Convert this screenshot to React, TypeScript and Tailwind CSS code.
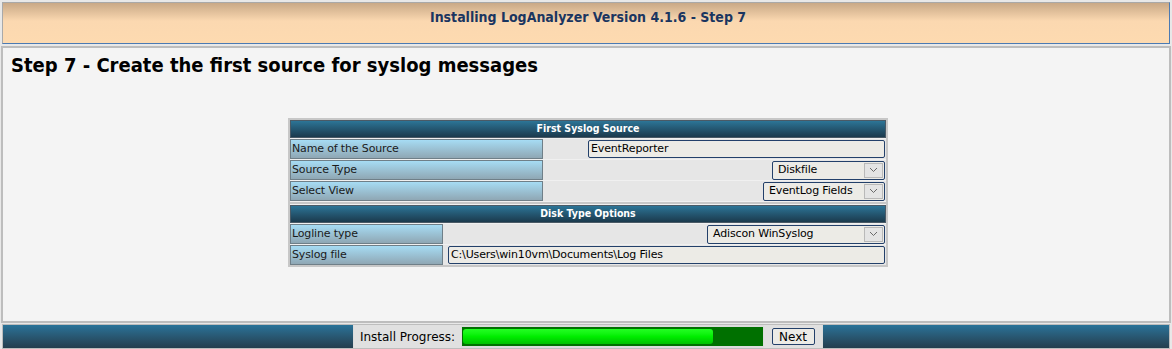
import React from "react";

const font = { fontFamily: '"DejaVu Sans", Verdana, sans-serif' };
const cond = { fontFamily: '"DejaVu Sans Condensed", "DejaVu Sans", sans-serif' };

function Label({ children }: { children: React.ReactNode }) {
  return (
    <div className="flex items-center h-full px-px text-[11px] tracking-[-0.15px] text-[#1a1a1a] border border-[#6f7f88] bg-gradient-to-b from-[#a6dcf4] to-[#8fa7b4]">
      {children}
    </div>
  );
}

function Select({ value, w }: { value: string; w: string }) {
  return (
    <div className={`flex items-stretch h-[19px] ${w} border border-[#23406a] rounded-[2px] bg-[#ecebe6]`}>
      <span className="flex-1 flex items-center pl-[5px] text-[11px] tracking-[-0.15px] text-black">{value}</span>
      <span className="w-[19px] m-px flex items-center justify-center border border-[#b9b9b9] bg-[#e4e4e4]">
        <svg width="9" height="6" viewBox="0 0 9 6">
          <path d="M1 1 L4.5 4.5 L8 1" fill="none" stroke="#6a6a6a" strokeWidth="1" />
        </svg>
      </span>
    </div>
  );
}

function Input({ value, w }: { value: string; w: string }) {
  return (
    <div className={`flex items-center h-[18px] ${w} border border-[#23406a] rounded-[2px] bg-[#ecebe6] pl-[2px] text-[11px] tracking-[-0.15px] text-black`}>
      {value}
    </div>
  );
}

function Head({ children }: { children: React.ReactNode }) {
  return (
    <div
      className="h-[18px] flex items-center justify-center text-[10.5px] font-bold text-white bg-gradient-to-b from-[#2c7597] to-[#1b3a4d] border border-[#4a5a66]"
      style={cond}
    >
      {children}
    </div>
  );
}

export default function App() {
  return (
    <div className="w-[1172px] h-[349px] bg-[#e8e8e8] flex flex-col" style={font}>
      {/* top banner */}
      <div className="mx-[2px] mt-[2px] h-[42px] border border-[#a9a9a9] border-b-[#4b7ab3] border-r-[#4b7ab3] bg-gradient-to-b from-[#c9a987] via-[#fbd8b0] via-45% to-[#fddab0] flex justify-center pt-[5px]">
        <span className="text-[14px] font-bold text-[#1a3560] ml-[4px] leading-[18px]" style={cond}>
          Installing LogAnalyzer Version 4.1.6 - Step 7
        </span>
      </div>

      {/* main */}
      <div className="mx-[1px] mt-[2px] h-[277px] border-2 border-[#bdbdbd] bg-[#f4f4f4] flex flex-col">
        <h1 className="mt-[3px] ml-[8px] text-[20px] font-bold text-black leading-[28px]" style={cond}>
          Step 7 - Create the first source for syslog messages
        </h1>

        <div className="mt-[39px] ml-[285px] w-[600px] border-2 border-[#c7c7c7] bg-[#f0f0f0] flex flex-col gap-px">
          <Head>First Syslog Source</Head>
          <div className="grid grid-cols-[253px_1fr] h-[20px] bg-[#e6e6e6]">
            <Label>Name of the Source</Label>
            <div className="flex items-center justify-end pr-px">
              <Input value="EventReporter" w="w-[297px]" />
            </div>
          </div>
          <div className="grid grid-cols-[253px_1fr] h-[20px] bg-[#e6e6e6]">
            <Label>Source Type</Label>
            <div className="flex items-center justify-end pr-px">
              <Select value="Diskfile" w="w-[113px]" />
            </div>
          </div>
          <div className="grid grid-cols-[253px_1fr] h-[20px] bg-[#e6e6e6]">
            <Label>Select View</Label>
            <div className="flex items-center justify-end pr-px">
              <Select value="EventLog Fields" w="w-[122px]" />
            </div>
          </div>
          <div className="h-[2px] bg-[#c7c7c7]" />
          <Head>Disk Type Options</Head>
          <div className="grid grid-cols-[153px_1fr] h-[20px] bg-[#e6e6e6]">
            <Label>Logline type</Label>
            <div className="flex items-center justify-end pr-px">
              <Select value="Adiscon WinSyslog" w="w-[178px]" />
            </div>
          </div>
          <div className="grid grid-cols-[153px_1fr] h-[20px] bg-[#e6e6e6]">
            <Label>Syslog file</Label>
            <div className="flex items-center justify-end pr-px">
              <Input value="C:\Users\win10vm\Documents\Log Files" w="w-[437px]" />
            </div>
          </div>
        </div>
      </div>

      {/* footer */}
      <div className="mx-[2px] mt-[1px] h-[25px] flex items-stretch gap-px border border-[#bdbdbd] bg-[#dcdcdc]">
        <div className="w-[350px] bg-gradient-to-b from-[#2a7399] to-[#243e4e]" />
        <div className="w-[107px] flex items-center justify-center text-[12px] text-black bg-[#e0e0e0]">Install Progress:</div>
        <div className="w-[301px] my-[2px] bg-[#007000] flex items-center">
          <div className="w-[250px] h-[15px] ml-px rounded-[3px] bg-gradient-to-b from-[#22ff22] via-[#00ee00] to-[#00c000]" />
        </div>
        <div className="w-[58px] flex items-center justify-center bg-[#e0e0e0]">
          <span className="h-[17px] w-[43px] flex items-center justify-center border border-[#23406a] rounded-[2px] bg-[#ecebe6] text-[12px] text-black">Next</span>
        </div>
        <div className="flex-1 bg-gradient-to-b from-[#2a7399] to-[#243e4e]" />
      </div>
    </div>
  );
}
